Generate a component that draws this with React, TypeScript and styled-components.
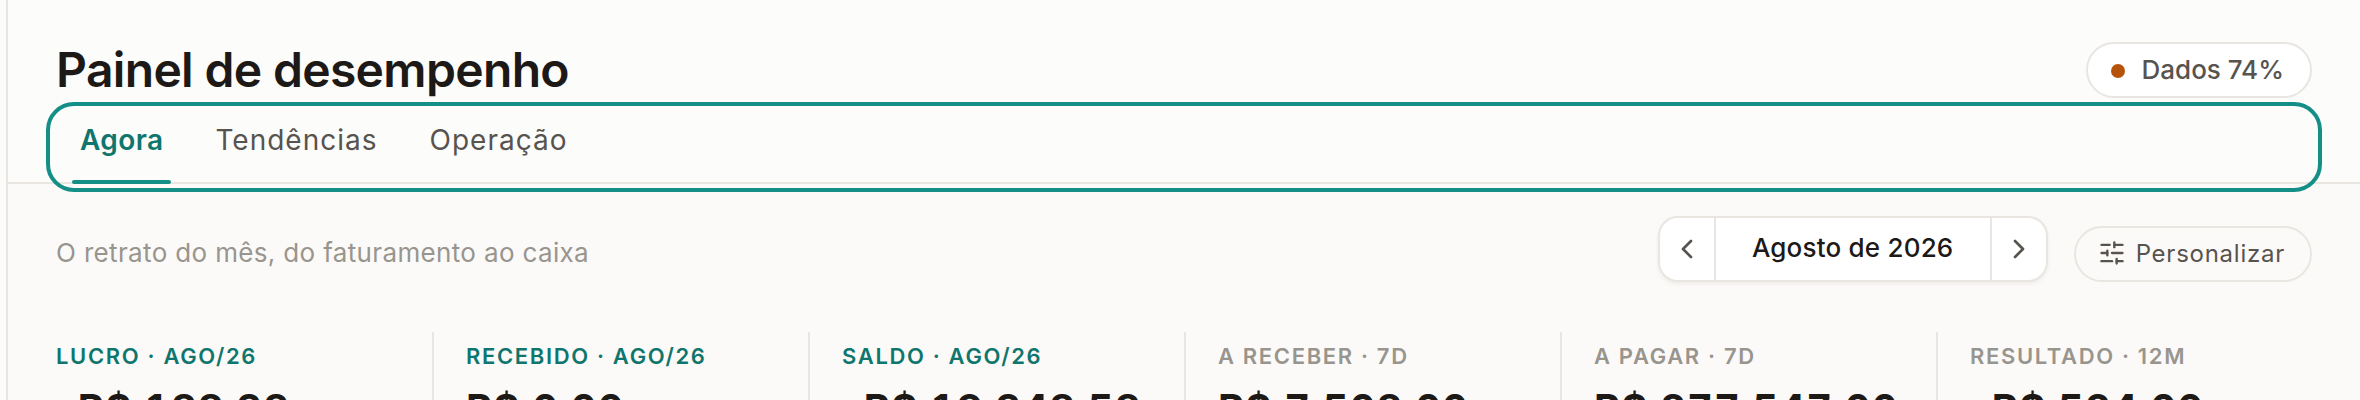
import React from "react";
import styled, { createGlobalStyle } from "styled-components";
import { ChevronLeft, ChevronRight, SlidersHorizontal } from "lucide-react";

const Global = createGlobalStyle`
  html, body { margin: 0; padding: 0; height: 400px; overflow: hidden; background: #fcfcfa; }
  * { box-sizing: border-box; }
  body { font-family: Inter, "Noto Sans", sans-serif; color: #1c1917; }
`;

const Shell = styled.div`
  display: flex;
  width: 2360px;
  height: 400px;
  overflow: hidden;
`;
const Rail = styled.aside`
  flex: 0 0 8px;
  border-right: 2px solid #e9e6e1;
`;
const Main = styled.main`
  flex: 1;
  min-width: 0;
  background: #fcfaf8;
`;
const Header = styled.header`
  padding: 42px 48px 0;
  background: #fcfcfa;
  border-bottom: 2px solid #e9e6e1;
`;
const TitleRow = styled.div`
  display: flex;
  align-items: center;
  justify-content: space-between;
  height: 56px;
  margin-bottom: 14px;
`;
const Title = styled.h1`
  margin: 0;
  font-size: 48px;
  line-height: 56px;
  font-weight: 600;
  letter-spacing: -0.66px;
  color: #1c1917;
`;
const StatusPill = styled.div`
  display: flex;
  align-items: center;
  gap: 17px;
  height: 56px;
  padding: 0 26px 2px 23px;
  background: #fff;
  border: 2px solid #e9e6e1;
  border-radius: 28px;
  font-size: 26px;
  font-weight: 500;
  color: #57534e;
`;
const Dot = styled.span`
  width: 14px;
  height: 14px;
  margin-top: 4px;
  border-radius: 50%;
  background: #b45309;
`;
const TabList = styled.nav`
  display: flex;
  gap: 36px;
  height: 70px;
  padding-left: 16px;
  border-radius: 18px;
  outline: 4px solid #148f88;
  outline-offset: 6px;
`;
const Tab = styled.div<{ $active?: boolean }>`
  position: relative;
  height: 72px;
  padding: 0 8px;
  line-height: 56px;
  font-size: 28px;
  font-weight: ${(p) => (p.$active ? 600 : 400)};
  letter-spacing: ${(p) => (p.$active ? "0.4px" : "1px")};
  color: ${(p) => (p.$active ? "#0f766e" : "#57534e")};
  &::after {
    content: "";
    display: ${(p) => (p.$active ? "block" : "none")};
    position: absolute;
    left: 0;
    right: 0;
    bottom: 0;
    height: 4px;
    border-radius: 2px;
    background: #148f88;
  }
`;
const SubRow = styled.div`
  display: flex;
  align-items: flex-end;
  justify-content: space-between;
  padding: 32px 48px 0;
`;
const Subtitle = styled.p`
  margin: 0 0 11px;
  font-size: 26px;
  line-height: 36px;
  letter-spacing: 0.35px;
  color: #98958e;
`;
const Controls = styled.div`
  display: flex;
  align-items: flex-end;
  gap: 26px;
`;
const Stepper = styled.div`
  display: flex;
  align-items: stretch;
  width: 390px;
  height: 66px;
  background: #fff;
  border: 2px solid #e9e6e1;
  border-radius: 20px;
  box-shadow: 0 2px 4px rgba(28, 25, 23, 0.06);
`;
const StepButton = styled.div<{ $side: "left" | "right" }>`
  flex: 0 0 56px;
  display: flex;
  align-items: center;
  justify-content: center;
  color: #57534e;
  ${(p) => (p.$side === "left" ? "border-right" : "border-left")}: 2px solid #e9e6e1;
`;
const MonthLabel = styled.div`
  flex: 1;
  text-align: center;
  line-height: 60px;
  font-size: 26px;
  font-weight: 500;
  letter-spacing: 0.2px;
  color: #1c1917;
`;
const GhostButton = styled.div`
  display: flex;
  align-items: center;
  gap: 10px;
  height: 56px;
  padding: 0 25px 2px 22px;
  border: 2px solid #e9e6e1;
  border-radius: 28px;
  font-size: 24px;
  font-weight: 400;
  letter-spacing: 0.75px;
  color: #57534e;
`;
const KpiStrip = styled.section`
  display: grid;
  grid-template-columns: repeat(6, 376px);
  padding: 50px 48px 0;
`;
const KpiCell = styled.div<{ $first?: boolean }>`
  padding: 10px 0 20px ${(p) => (p.$first ? "0" : "32px")};
  border-left: ${(p) => (p.$first ? "0" : "2px solid #e9e6e1")};
`;
const KpiLabel = styled.div<{ $tone: "brand" | "muted" }>`
  font-size: 22px;
  line-height: 28px;
  font-weight: 600;
  letter-spacing: 1.65px;
  text-transform: uppercase;
  color: ${(p) => (p.$tone === "brand" ? "#0f766e" : "#98958e")};
`;
const KpiValue = styled.div`
  margin-top: 15px;
  font-size: 40px;
  line-height: 48px;
  font-weight: 700;
  letter-spacing: 1px;
  font-variant-numeric: tabular-nums;
  white-space: nowrap;
  color: #1c1917;
`;
const Sign = styled.span`
  letter-spacing: -4px;
`;

const kpis: { label: string; value: string; negative?: boolean; tone: "brand" | "muted" }[] = [
  { label: "Lucro · ago/26", value: "R$ 188,38", negative: true, tone: "brand" },
  { label: "Recebido · ago/26", value: "R$ 0,00", tone: "brand" },
  { label: "Saldo · ago/26", value: "R$ 19.348,58", negative: true, tone: "brand" },
  { label: "A receber · 7d", value: "R$ 7.508,00", tone: "muted" },
  { label: "A pagar · 7d", value: "R$ 277.547,00", tone: "muted" },
  { label: "Resultado · 12m", value: "R$ 524,00", negative: true, tone: "muted" },
];

export default function App() {
  return (
    <>
      <Global />
      <Shell>
        <Rail />
        <Main>
          <Header>
            <TitleRow>
              <Title>Painel de desempenho</Title>
              <StatusPill>
                <Dot />
                Dados 74%
              </StatusPill>
            </TitleRow>
            <TabList>
              <Tab $active>Agora</Tab>
              <Tab>Tendências</Tab>
              <Tab>Operação</Tab>
            </TabList>
          </Header>
          <SubRow>
            <Subtitle>O retrato do mês, do faturamento ao caixa</Subtitle>
            <Controls>
              <Stepper>
                <StepButton $side="left">
                  <ChevronLeft size={32} strokeWidth={2} />
                </StepButton>
                <MonthLabel>Agosto de 2026</MonthLabel>
                <StepButton $side="right">
                  <ChevronRight size={32} strokeWidth={2} />
                </StepButton>
              </Stepper>
              <GhostButton>
                <SlidersHorizontal size={28} strokeWidth={2} />
                Personalizar
              </GhostButton>
            </Controls>
          </SubRow>
          <KpiStrip>
            {kpis.map((k, i) => (
              <KpiCell key={k.label} $first={i === 0}>
                <KpiLabel $tone={k.tone}>{k.label}</KpiLabel>
                <KpiValue>
                  {k.negative && <Sign>-</Sign>}
                  {k.value}
                </KpiValue>
              </KpiCell>
            ))}
          </KpiStrip>
        </Main>
      </Shell>
    </>
  );
}
